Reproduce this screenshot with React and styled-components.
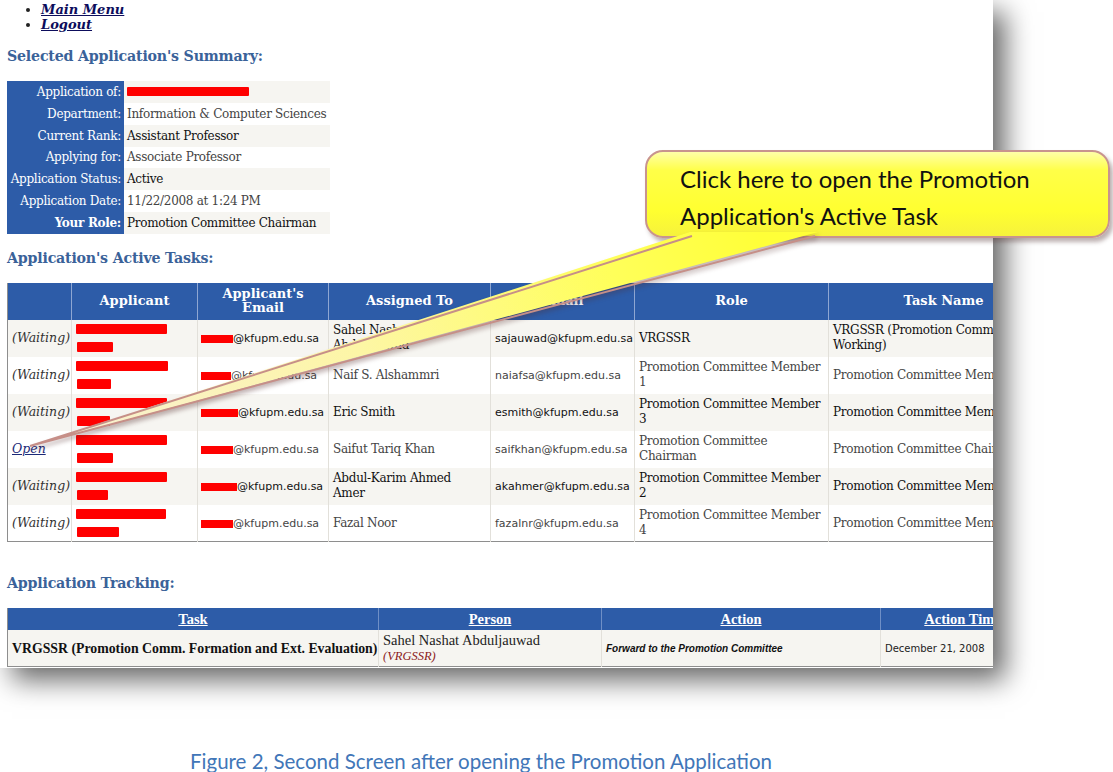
import React from "react"
import styled, { createGlobalStyle } from "styled-components"

const Global = createGlobalStyle`
    html, body { margin: 0; padding: 0; background: #fff; }
`;

const BLUE = "#2d5ca8";

const Canvas = styled.div`
    position: relative;
    width: 1113px;
    height: 772px;
    background: #fff;
    overflow: hidden;
`;

const Page = styled.div`
    box-sizing: border-box;
    width: 993px;
    height: 668px;
    overflow: hidden;
    background: #fff;
    padding-left: 7px;
    box-shadow: 12px 12px 26px rgba(0, 0, 0, 0.6);
    font-family: "DejaVu Serif", Georgia, serif;
    font-size: 12px;
    letter-spacing: -0.3px;
    color: #222;
`;

const NavList = styled.ul`
    margin: 2px 0 0;
    padding-left: 34px;
    line-height: 15px;
    font-size: 13px;
    letter-spacing: 0;
`;

const NavLink = styled.a`
    color: #0d0d5c;
    font-weight: bold;
    font-style: italic;
    text-decoration: underline;
`;

const SectionTitle = styled.h3`
    margin: ${p => p.$mt || 15}px 0 16px;
    height: 18px;
    line-height: 18px;
    font-size: 14.2px;
    font-weight: bold;
    color: #3a6299;
    letter-spacing: -0.2px;
`;

const SummaryTable = styled.table`
    border-collapse: collapse;
    table-layout: fixed;
    width: 323px;
    tr:nth-child(odd) td:last-child { background: #f6f5f1; }
`;

const Label = styled.td`
    width: 113px;
    height: 21.85px;
    padding: 0 3px 0 1px;
    background: ${BLUE};
    color: #fff;
    text-align: right;
    white-space: nowrap;
    font-weight: ${p => (p.$bold ? "bold" : "normal")};
`;

const Value = styled.td`
    padding: 0 3px;
    white-space: nowrap;
    color: ${p => (p.$dim ? "#444" : "#111")};
`;

const Grid = styled.table`
    border-collapse: collapse;
    table-layout: fixed;
    width: ${p => p.$w}px;
    border-left: 1px solid #8e8e8e;
    border-bottom: 1px solid #8e8e8e;

    th {
        background: ${BLUE};
        color: #fff;
        font-weight: bold;
        border-right: 1px solid #8ea6d2;
        padding: 0 4px;
        line-height: 14px;
        letter-spacing: 0;
    }
    td {
        border-right: 1px solid #e2e0da;
        padding: 0 4px;
        vertical-align: middle;
        line-height: 15px;
    }
    tbody tr:nth-child(odd) { background: #f6f5f1; color: #111; }
    tbody tr:nth-child(even) { background: #fff; color: #444; }
`;

const HeadRow = styled.tr`
    height: ${p => p.$h}px;
    th { font-size: 13px; }
`;

const BodyRow = styled.tr`
    height: 37px;
`;

const Waiting = styled.span`
    font-style: italic;
    font-size: 12.5px;
    letter-spacing: 0;
    color: #333;
`;

const OpenLink = styled.a`
    font-style: italic;
    font-size: 12.5px;
    letter-spacing: 0;
    color: #1c2a78;
    text-decoration: underline;
`;

const Redact = styled.span`
    display: block;
    width: ${p => p.$w}px;
    height: ${p => p.$h || 10}px;
    margin-left: ${p => p.$dx || 0}px;
    background: #f00;
    border-radius: 1px;
`;

const RedactStack = styled.div`
    display: flex;
    flex-direction: column;
    gap: ${p => p.$gap || 8}px;
`;

const Mail = styled.span`
    font-family: "DejaVu Sans", Verdana, sans-serif;
    font-size: 11px;
    letter-spacing: 0;
    white-space: nowrap;
`;

const MailBar = styled.span`
    display: inline-block;
    width: ${p => p.$w || 32}px;
    height: 8px;
    background: #f00;
    vertical-align: -1px;
`;

const TrackTable = styled(Grid)`
    font-family: "Liberation Serif", "Times New Roman", serif;
    letter-spacing: 0;
    th a { color: #fff; text-decoration: underline; font-size: 14.5px; }
    th { border-right-color: #6f8fc6; }
`;

const TrackRow = styled.tr`
    height: 36px;
`;

const TaskCell = styled.td`
    font-weight: bold;
    font-size: 13.8px;
    white-space: nowrap;
    color: #111;
`;

const Person = styled.div`
    font-size: 14.5px;
    line-height: 16px;
    color: #222;
    small {
        display: block;
        font-size: 12.5px;
        font-style: italic;
        color: #8b1a1a;
    }
`;

const ActionText = styled.td`
    font-family: "Liberation Sans", Arial, sans-serif;
    font-size: 10px;
    font-weight: bold;
    font-style: italic;
    color: #111;
`;

const TimeText = styled.td`
    font-family: "DejaVu Sans", Verdana, sans-serif;
    font-size: 10px;
    white-space: nowrap;
    color: #222;
`;

const Caption = styled.div`
    margin-top: 82px;
    padding-left: 190px;
    font-family: Lato, "Open Sans", sans-serif;
    font-size: 20.5px;
    line-height: 22px;
    color: #4176b8;
`;

const Bubble = styled.div`
    position: absolute;
    left: 645px;
    top: 150px;
    width: 465px;
    height: 88px;
    box-sizing: border-box;
    padding: 8px 0 0 33px;
    border: 2px solid #c8948e;
    border-radius: 18px;
    background: linear-gradient(180deg, #ffffa8 0%, #ffff48 22%, #ffff30 70%, #f6f23c 100%);
    box-shadow: 3px 4px 4px rgba(90, 60, 60, 0.4);
    font-family: Lato, "Open Sans", sans-serif;
    font-size: 24px;
    line-height: 37px;
    color: #111;
`;

const PointerSvg = styled.svg`
    position: absolute;
    left: 0;
    top: 0;
    pointer-events: none;
    filter: drop-shadow(2px 3px 2px rgba(80, 40, 40, 0.35));
`;

const tasks = [
    { open: false, bars: [91, 36], mail: 32, who: "Sahel Nashat Abduljauwad", email: "sajauwad@kfupm.edu.sa", role: "VRGSSR", task: "VRGSSR (Promotion Committee Working)" },
    { open: false, bars: [92, 34], mail: 30, who: "Naif S. Alshammri", email: "naiafsa@kfupm.edu.sa", role: "Promotion Committee Member 1", task: "Promotion Committee Member 1" },
    { open: false, bars: [91, 33], mail: 37, who: "Eric Smith", email: "esmith@kfupm.edu.sa", role: "Promotion Committee Member 3", task: "Promotion Committee Member 3" },
    { open: true, bars: [91, 36], mail: 32, who: "Saifut Tariq Khan", email: "saifkhan@kfupm.edu.sa", role: "Promotion Committee Chairman", task: "Promotion Committee Chairman" },
    { open: false, bars: [91, 31], mail: 36, who: "Abdul-Karim Ahmed Amer", email: "akahmer@kfupm.edu.sa", role: "Promotion Committee Member 2", task: "Promotion Committee Member 2" },
    { open: false, bars: [90, 42], mail: 32, who: "Fazal Noor", email: "fazalnr@kfupm.edu.sa", role: "Promotion Committee Member 4", task: "Promotion Committee Member 4" },
];

const summary = [
    ["Application of:", null],
    ["Department:", "Information & Computer Sciences"],
    ["Current Rank:", "Assistant Professor"],
    ["Applying for:", "Associate Professor"],
    ["Application Status:", "Active"],
    ["Application Date:", "11/22/2008 at 1:24 PM"],
    ["Your Role:", "Promotion Committee Chairman"],
];

// yellow speech bubble with the long pointer down to the "Open" link
const Callout = () => (
    <>
        <Bubble>
            Click here to open the Promotion
            <br />
            Application's Active Task
        </Bubble>
        <PointerSvg width="1113" height="460" viewBox="0 0 1113 460">
            <defs>
                <linearGradient id="ptr" gradientUnits="userSpaceOnUse" x1="30" y1="446" x2="760" y2="236">
                    <stop offset="0" stopColor="#f8efd8" />
                    <stop offset="0.45" stopColor="#fdf6a6" />
                    <stop offset="0.8" stopColor="#ffff5a" />
                    <stop offset="1" stopColor="#ffff38" />
                </linearGradient>
            </defs>
            <polygon points="690,232 818,232 30,446" fill="url(#ptr)" />
            <path d="M692 236 L30 446 L815 236" fill="none" stroke="#c68f88" strokeWidth="2" strokeLinejoin="miter" />
        </PointerSvg>
    </>
);

const App = () => {
    return (
        <Canvas>
            <Global />
            <Page>
                <NavList>
                    <li><NavLink>Main Menu</NavLink></li>
                    <li><NavLink>Logout</NavLink></li>
                </NavList>

                <SectionTitle>Selected Application's Summary:</SectionTitle>
                <SummaryTable>
                    <colgroup>
                        <col style={{ width: 117 }} />
                        <col style={{ width: 206 }} />
                    </colgroup>
                    <tbody>
                        {summary.map(([label, value], i) => (
                            <tr key={label}>
                                <Label $bold={i === 6}>{label}</Label>
                                <Value $dim={i % 2 === 1}>
                                    {value === null ? <Redact $w={122} $h={9} /> : value}
                                </Value>
                            </tr>
                        ))}
                    </tbody>
                </SummaryTable>

                <SectionTitle>Application's Active Tasks:</SectionTitle>
                <Grid $w={1051}>
                    <colgroup>
                        <col style={{ width: 64 }} />
                        <col style={{ width: 126 }} />
                        <col style={{ width: 131 }} />
                        <col style={{ width: 162 }} />
                        <col style={{ width: 144 }} />
                        <col style={{ width: 194 }} />
                        <col style={{ width: 230 }} />
                    </colgroup>
                    <thead>
                        <HeadRow $h={37}>
                            <th></th>
                            <th>Applicant</th>
                            <th>Applicant's Email</th>
                            <th>Assigned To</th>
                            <th>Email</th>
                            <th>Role</th>
                            <th>Task Name</th>
                        </HeadRow>
                    </thead>
                    <tbody>
                        {tasks.map(t => (
                            <BodyRow key={t.email}>
                                <td>{t.open ? <OpenLink>Open</OpenLink> : <Waiting>(Waiting)</Waiting>}</td>
                                <td>
                                    <RedactStack>
                                        <Redact $w={t.bars[0]} />
                                        <Redact $w={t.bars[1]} $dx={1} />
                                    </RedactStack>
                                </td>
                                <td style={{ paddingLeft: 3 }}>
                                    <Mail><MailBar $w={t.mail} />@kfupm.edu.sa</Mail>
                                </td>
                                <td>{t.who}</td>
                                <td><Mail>{t.email}</Mail></td>
                                <td>{t.role}</td>
                                <td>{t.task}</td>
                            </BodyRow>
                        ))}
                    </tbody>
                </Grid>

                <SectionTitle $mt={32}>Application Tracking:</SectionTitle>
                <TrackTable $w={1037}>
                    <colgroup>
                        <col style={{ width: 371 }} />
                        <col style={{ width: 223 }} />
                        <col style={{ width: 279 }} />
                        <col style={{ width: 164 }} />
                    </colgroup>
                    <thead>
                        <HeadRow $h={22}>
                            <th><a>Task</a></th>
                            <th><a>Person</a></th>
                            <th><a>Action</a></th>
                            <th><a>Action Time</a></th>
                        </HeadRow>
                    </thead>
                    <tbody>
                        <TrackRow>
                            <TaskCell>VRGSSR (Promotion Comm. Formation and Ext. Evaluation)</TaskCell>
                            <td>
                                <Person>
                                    Sahel Nashat Abduljauwad
                                    <small>(VRGSSR)</small>
                                </Person>
                            </td>
                            <ActionText>Forward to the Promotion Committee</ActionText>
                            <TimeText>December 21, 2008</TimeText>
                        </TrackRow>
                    </tbody>
                </TrackTable>
            </Page>

            <Caption>Figure 2, Second Screen after opening the Promotion Application</Caption>

            <Callout />
        </Canvas>
    )
}

export default App;
